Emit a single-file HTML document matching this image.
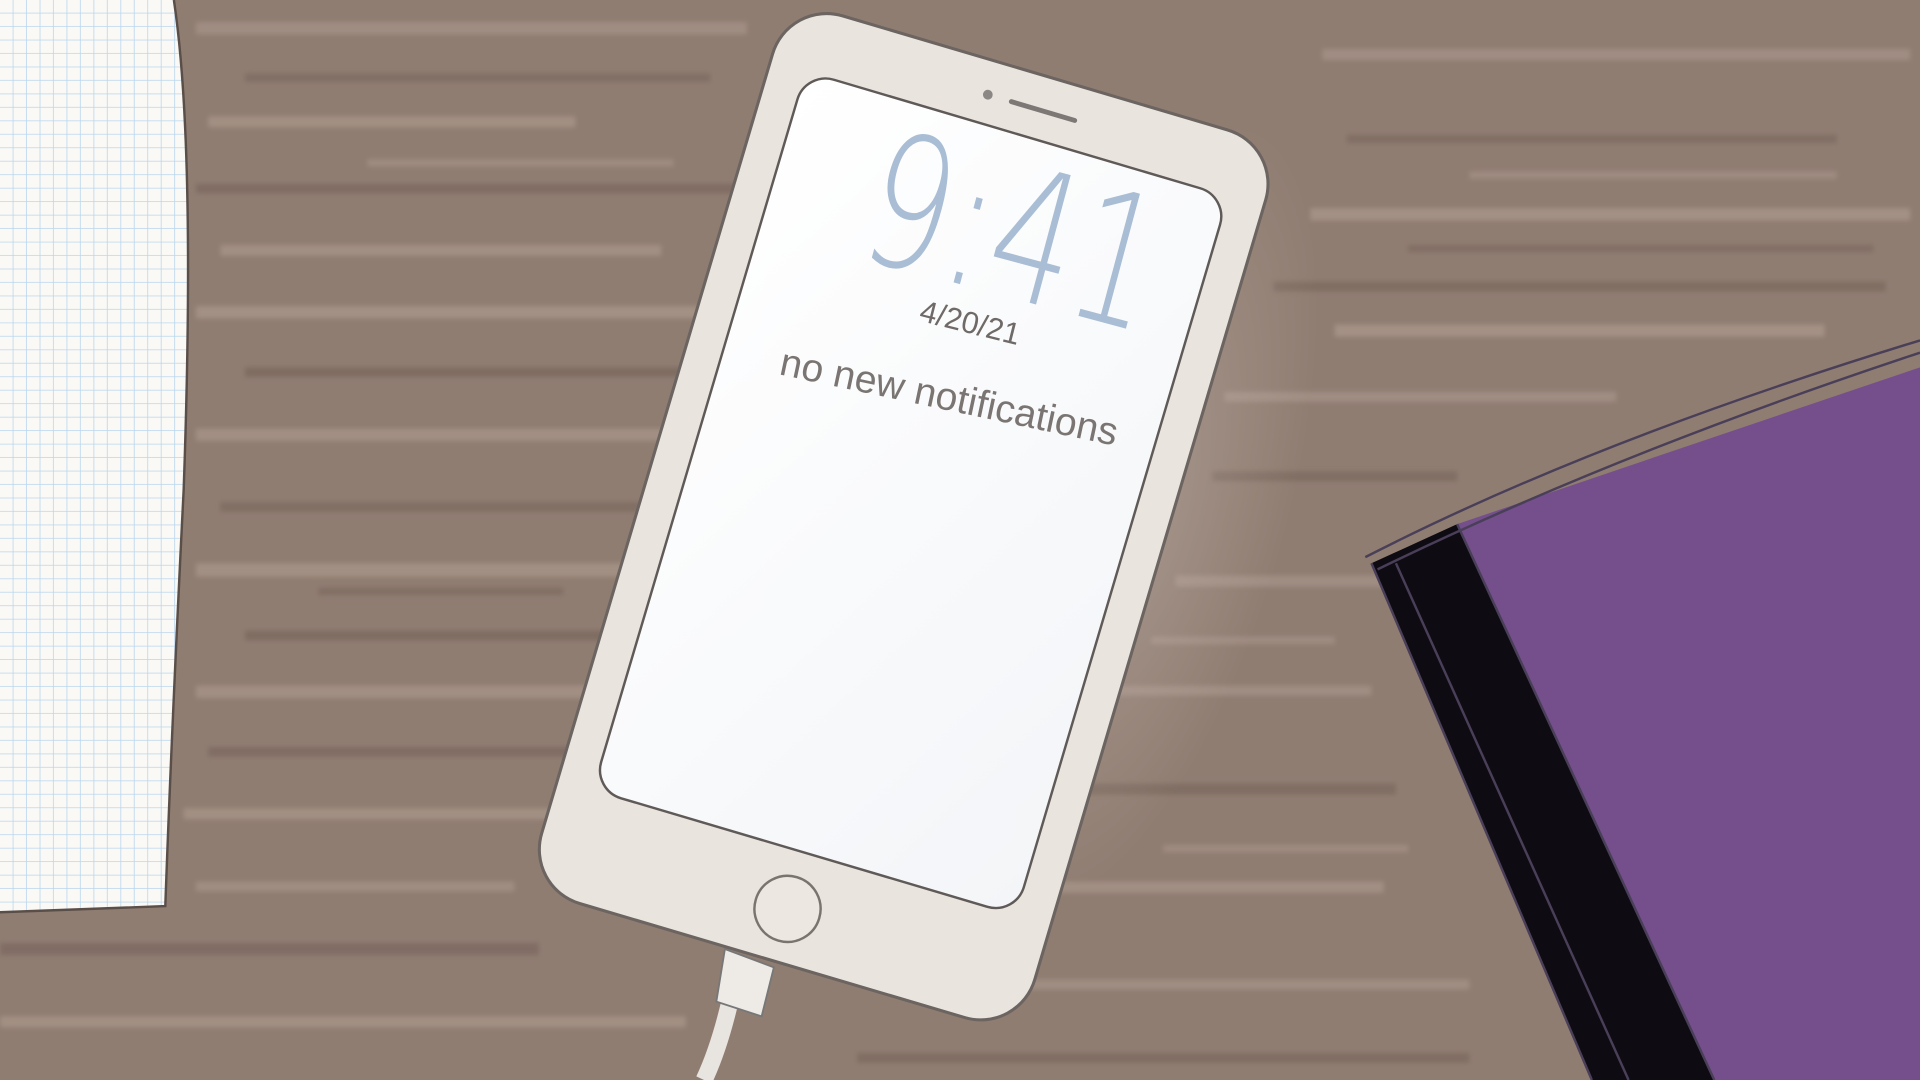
<!DOCTYPE html>
<html><head><meta charset="utf-8"><style>
html,body{margin:0;padding:0;width:1920px;height:1080px;overflow:hidden;background:#8f7b70}
svg{display:block}
</style></head><body>
<svg width="1920" height="1080" viewBox="0 0 1568 882" preserveAspectRatio="none" xmlns="http://www.w3.org/2000/svg">
<defs>
<pattern id="grid" width="11" height="11" patternUnits="userSpaceOnUse">
<path d="M11 0V11M0 11H11" stroke="#b9d6ee" stroke-width="1.3" fill="none"/>
</pattern>
<linearGradient id="scr" x1="0" y1="0" x2="1" y2="1">
<stop offset="0" stop-color="#ffffff"/><stop offset="1" stop-color="#f3f5f8"/>
</linearGradient>
<radialGradient id="glow" cx="0.5" cy="0.5" r="0.5">
<stop offset="0" stop-color="#d8cdc6" stop-opacity="0.3"/><stop offset="1" stop-color="#d8cdc6" stop-opacity="0"/>
</radialGradient>
<filter id="blur"><feGaussianBlur stdDeviation="2"/></filter>
</defs>
<rect width="1568" height="882" fill="#907d72"/>
<g opacity="0.75" filter="url(#blur)">
<rect x="160" y="18" width="450" height="10" fill="#a69388"/>
<rect x="200" y="60" width="380" height="7" fill="#7d6a60"/>
<rect x="170" y="95" width="300" height="9" fill="#a99689"/>
<rect x="1080" y="40" width="480" height="9" fill="#a69388"/>
<rect x="1100" y="110" width="400" height="7" fill="#7d6a60"/>
<rect x="160" y="150" width="460" height="8" fill="#7b685e"/>
<rect x="1070" y="170" width="490" height="10" fill="#aa978b"/>
<rect x="180" y="200" width="360" height="9" fill="#a89589"/>
<rect x="1040" y="230" width="500" height="8" fill="#7c695f"/>
<rect x="160" y="250" width="420" height="10" fill="#aa978a"/>
<rect x="1090" y="265" width="400" height="10" fill="#ab988b"/>
<rect x="200" y="300" width="380" height="8" fill="#7a675d"/>
<rect x="1000" y="320" width="320" height="8" fill="#a69388"/>
<rect x="160" y="350" width="440" height="10" fill="#a89589"/>
<rect x="990" y="385" width="200" height="8" fill="#7c695f"/>
<rect x="180" y="410" width="380" height="8" fill="#7d6a60"/>
<rect x="160" y="460" width="400" height="11" fill="#a99689"/>
<rect x="960" y="470" width="180" height="9" fill="#a69388"/>
<rect x="200" y="515" width="340" height="8" fill="#7a675d"/>
<rect x="160" y="560" width="360" height="10" fill="#a89589"/>
<rect x="900" y="560" width="220" height="8" fill="#a69388"/>
<rect x="170" y="610" width="340" height="8" fill="#7b685e"/>
<rect x="880" y="640" width="260" height="9" fill="#7c695f"/>
<rect x="150" y="660" width="300" height="9" fill="#a99689"/>
<rect x="160" y="720" width="260" height="8" fill="#a69388"/>
<rect x="850" y="720" width="280" height="9" fill="#a89589"/>
<rect x="0" y="770" width="440" height="10" fill="#7b685e"/>
<rect x="820" y="800" width="380" height="8" fill="#a69388"/>
<rect x="0" y="830" width="560" height="9" fill="#a99689"/>
<rect x="700" y="860" width="500" height="8" fill="#7c695f"/>
<rect x="300" y="130" width="250" height="6" fill="#a49186"/>
<rect x="1200" y="140" width="300" height="6" fill="#a49186"/>
<rect x="1150" y="200" width="380" height="6" fill="#7e6b61"/>
<rect x="260" y="480" width="200" height="6" fill="#7e6b61"/>
<rect x="940" y="520" width="150" height="6" fill="#a49186"/>
<rect x="950" y="690" width="200" height="6" fill="#a49186"/>
</g>
<ellipse cx="930" cy="420" rx="120" ry="330" fill="url(#glow)" transform="rotate(16 930 420)"/>
<!-- paper -->
<path d="M0 0H142Q160 120 150 400Q140 600 135 740L0 745Z" fill="#fbf9f5"/>
<path d="M0 0H142Q160 120 150 400Q140 600 135 740L0 745Z" fill="url(#grid)"/>
<path d="M142 0Q160 120 150 400Q140 600 135 740L0 745" fill="none" stroke="#5a4e48" stroke-width="2"/>
<!-- book -->
<path d="M1120 460L1190 428L1400 882H1300Z" fill="#0e0b12"/>
<path d="M1190 428L1568 300V882H1400Z" fill="#744f8c"/>
<path d="M1115 455Q1300 360 1568 278M1125 465Q1320 370 1568 288M1190 428L1400 882M1120 460L1300 882M1140 460L1330 882" fill="none" stroke="#4a3f58" stroke-width="2"/>
<!-- cable -->
<path d="M600 800Q590 850 575 882" stroke="#e8e4e0" stroke-width="14" fill="none"/>
<path d="M592 775L632 790L622 830L585 818Z" fill="#eeeae6" stroke="#777" stroke-width="1.5"/>
<!-- phone -->
<g transform="rotate(16.5 738 422)">
<rect x="528" y="44" width="420" height="756" rx="46" fill="#e9e4de" stroke="#6b6460" stroke-width="2.5"/>
<rect x="558" y="96" width="360" height="612" rx="24" fill="url(#scr)" stroke="#5f5a57" stroke-width="2"/>
<circle cx="706" cy="72" r="4" fill="#8b8784"/>
<rect x="724" y="70" width="58" height="4" rx="2" fill="#7d7875"/>
<circle cx="738" cy="756" r="27" fill="#ece7e1" stroke="#7a736e" stroke-width="2"/>
</g>
<g transform="translate(828 190) rotate(15) scale(0.72 1)">
<text x="0" y="52" text-anchor="middle" font-family="DejaVu Sans, Liberation Sans, sans-serif" font-weight="200" font-size="150" fill="#a9bdd4">9:41</text>
</g>
<text x="792" y="272" text-anchor="middle" font-family="Liberation Sans, sans-serif" font-size="25" fill="#6f6a67" transform="rotate(14 792 265)">4/20/21</text>
<text x="775" y="335" text-anchor="middle" font-family="Liberation Sans, sans-serif" font-size="32" fill="#7a7572" transform="rotate(12 775 325)">no new notifications</text>
</svg>
</body></html>
